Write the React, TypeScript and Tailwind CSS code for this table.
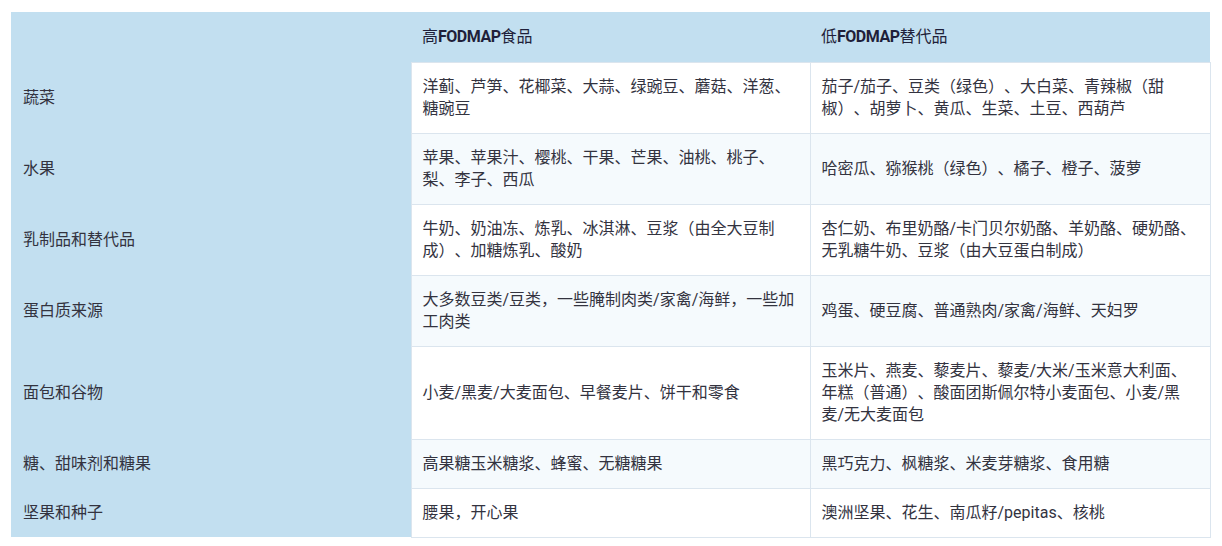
const rows: [string, string, string][] = [
  ["蔬菜", "洋蓟、芦笋、花椰菜、大蒜、绿豌豆、蘑菇、洋葱、糖豌豆", "茄子/茄子、豆类（绿色）、大白菜、青辣椒（甜椒）、胡萝卜、黄瓜、生菜、土豆、西葫芦"],
  ["水果", "苹果、苹果汁、樱桃、干果、芒果、油桃、桃子、梨、李子、西瓜", "哈密瓜、猕猴桃（绿色）、橘子、橙子、菠萝"],
  ["乳制品和替代品", "牛奶、奶油冻、炼乳、冰淇淋、豆浆（由全大豆制成）、加糖炼乳、酸奶", "杏仁奶、布里奶酪/卡门贝尔奶酪、羊奶酪、硬奶酪、无乳糖牛奶、豆浆（由大豆蛋白制成）"],
  ["蛋白质来源", "大多数豆类/豆类，一些腌制肉类/家禽/海鲜，一些加工肉类", "鸡蛋、硬豆腐、普通熟肉/家禽/海鲜、天妇罗"],
  ["面包和谷物", "小麦/黑麦/大麦面包、早餐麦片、饼干和零食", "玉米片、燕麦、藜麦片、藜麦/大米/玉米意大利面、年糕（普通）、酸面团斯佩尔特小麦面包、小麦/黑麦/无大麦面包"],
  ["糖、甜味剂和糖果", "高果糖玉米糖浆、蜂蜜、无糖糖果", "黑巧克力、枫糖浆、米麦芽糖浆、食用糖"],
  ["坚果和种子", "腰果，开心果", "澳洲坚果、花生、南瓜籽/pepitas、核桃"],
];

export default function App() {
  return (
    <div
      className="bg-white w-[1222px] h-[546px] pt-[12px] pl-[11px] text-[16px] leading-[22px] text-[#33333f] [text-spacing-trim:space-all]"
      style={{ fontFamily: '"Roboto", "Noto Sans CJK SC", sans-serif' }}
    >
      <table className="w-[1199px] border-collapse table-fixed">
        <colgroup>
          <col className="w-[400px]" />
          <col className="w-[399px]" />
          <col className="w-[400px]" />
        </colgroup>
        <thead>
          <tr className="bg-[#c2dff0] h-[50px]">
            <th />
            <th className="text-left font-normal px-[11px] text-[#1f1f3a]">
              高<span className="font-bold tracking-[-0.5px]">FODMAP</span>食品
            </th>
            <th className="text-left font-normal px-[11px] text-[#1f1f3a]">
              低<span className="font-bold tracking-[-0.5px]">FODMAP</span>替代品
            </th>
          </tr>
        </thead>
        <tbody>
          {rows.map(([cat, high, low], i) => (
            <tr key={cat} className={i % 2 === 0 ? "bg-white" : "bg-[#f5fafd]"}>
              <td className="bg-[#c2dff0] px-[12px] py-[13px] align-middle">{cat}</td>
              <td className="border border-[#dbe5ee] pl-[11px] pr-[10px] py-[13px] align-middle">{high}</td>
              <td className="border border-[#dbe5ee] pl-[11px] pr-[10px] py-[13px] align-middle">{low}</td>
            </tr>
          ))}
        </tbody>
      </table>
    </div>
  );
}
